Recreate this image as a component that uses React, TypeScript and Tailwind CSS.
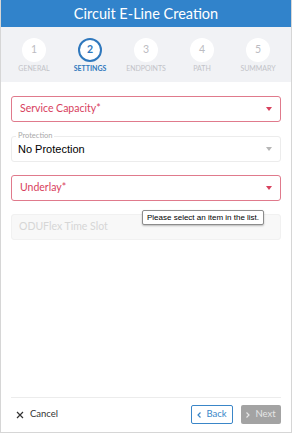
import React from 'react';

const steps = [
  { n: 1, label: 'GENERAL' },
  { n: 2, label: 'SETTINGS', active: true },
  { n: 3, label: 'ENDPOINTS' },
  { n: 4, label: 'PATH' },
  { n: 5, label: 'SUMMARY' },
];

function Caret({ color }: { color: string }) {
  return (
    <svg width="6" height="4" viewBox="0 0 6 4" className="shrink-0">
      <path d="M0 0 L6 0 L3 4 Z" fill={color} />
    </svg>
  );
}

export default function App() {
  const font = { fontFamily: 'Lato, "Noto Sans", sans-serif' };
  return (
    <div className="w-[292px] h-[433px] flex flex-col bg-white border-x border-b border-[#d6d6d6] relative" style={font}>
      {/* Header */}
      <div className="h-[27px] shrink-0 bg-[#3183cb] flex items-center justify-center text-white text-[14.5px]">
        Circuit E-Line Creation
      </div>

      {/* Stepper */}
      <div className="h-[55px] shrink-0 bg-[#f1f2f5] flex px-[5px] pt-[11px]">
        {steps.map((s) => (
          <div key={s.n} className="flex-1 flex flex-col items-center">
            <div
              className={
                s.active
                  ? 'w-[24px] h-[24px] rounded-full bg-white border-2 border-[#2f78bd] flex items-center justify-center text-[10.5px] font-bold text-[#2f78bd]'
                  : 'w-[24px] h-[24px] rounded-full bg-white flex items-center justify-center text-[10.5px] text-[#bcbcc2]'
              }
            >
              {s.n}
            </div>
            <div
              className={
                s.active
                  ? 'mt-[1px] text-[7px] font-bold text-[#2f78bd]'
                  : 'mt-[1px] text-[7px] text-[#c2c3c8]'
              }
            >
              {s.label}
            </div>
          </div>
        ))}
      </div>

      {/* Form */}
      <div className="flex-1 flex flex-col px-[10px] pt-[14px]">
        <div className="h-[26px] rounded-[3px] border border-[#e07a8c] flex items-center justify-between pl-[8px] pr-[8px]">
          <span className="text-[10.5px] text-[#d8415d]">Service Capacity*</span>
          <Caret color="#d8415d" />
        </div>

        <div className="mt-[14px] h-[26px] rounded-[3px] border border-[#ececec] flex items-center justify-between pl-[6px] pr-[8px] relative">
          <span className="absolute -top-[7px] left-[4px] bg-white px-[2px] text-[7.5px] text-[#a9a9a9] leading-[12px]">Protection</span>
          <span className="text-[11px] text-black mt-[1px]" style={{ fontFamily: '"Liberation Sans", Arial, sans-serif' }}>
            No Protection
          </span>
          <Caret color="#b6b6b6" />
        </div>

        <div className="mt-[13px] h-[26px] rounded-[3px] border border-[#e07a8c] flex items-center justify-between pl-[8px] pr-[8px]">
          <span className="text-[10.5px] text-[#d8415d]">Underlay*</span>
          <Caret color="#d8415d" />
        </div>

        <div className="mt-[13px] h-[26px] rounded-[3px] border border-[#f1f1f1] bg-[#f8f8f8] flex items-center pl-[7px] relative">
          <span className="text-[10.5px] text-[#d6d6d6]">ODUFlex Time Slot</span>
          <div
            className="absolute -top-[5px] left-[130px] h-[15px] px-[4px] flex items-center bg-white border border-[#8c8c8c] rounded-[2px] shadow-[0_1px_2px_rgba(0,0,0,0.25)] text-[8px] text-black whitespace-nowrap"
            style={{ fontFamily: '"Liberation Sans", Arial, sans-serif' }}
          >
            Please select an item in the list.
          </div>
        </div>
      </div>

      {/* Footer */}
      <div className="mx-[10px] border-t border-[#ececec] h-[34px] shrink-0 flex items-center justify-between mb-[1px]">
        <div className="flex items-center gap-[6px] pl-[5px] text-[9.5px] text-[#333]">
          <svg width="8" height="8" viewBox="0 0 8 8">
            <path d="M1 1 L7 7 M7 1 L1 7" stroke="#333" strokeWidth="1.2" />
          </svg>
          Cancel
        </div>
        <div className="flex items-center gap-[8px]">
          <div className="w-[42px] h-[19px] rounded-[2px] border border-[#3a86c8] flex items-center justify-center gap-[5px] text-[9.5px] text-[#3a86c8]">
            <svg width="4" height="6" viewBox="0 0 4 6">
              <path d="M3.5 0.5 L1 3 L3.5 5.5" stroke="#3a86c8" strokeWidth="1.2" fill="none" />
            </svg>
            Back
          </div>
          <div className="w-[40px] h-[19px] rounded-[2px] bg-[#a3a3a3] flex items-center justify-center gap-[5px] text-[9.5px] text-[#e6e6e6]">
            <svg width="4" height="6" viewBox="0 0 4 6">
              <path d="M0.5 0.5 L3 3 L0.5 5.5" stroke="#e6e6e6" strokeWidth="1.2" fill="none" />
            </svg>
            Next
          </div>
        </div>
      </div>
    </div>
  );
}
